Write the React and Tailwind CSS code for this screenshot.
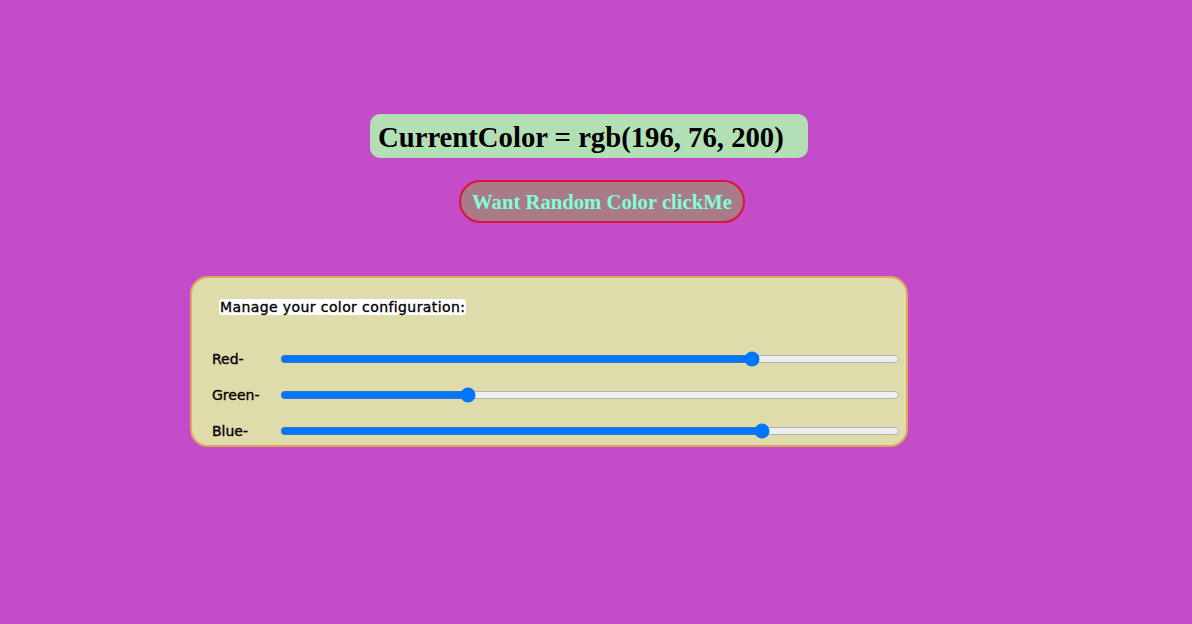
import { useState } from "react";

export default function App() {
  const [color, setColor] = useState({ r: 196, g: 76, b: 200 });

  const rgb = `rgb(${color.r}, ${color.g}, ${color.b})`;

  const randomColor = () => {
    setColor({
      r: Math.floor(Math.random() * 256),
      g: Math.floor(Math.random() * 256),
      b: Math.floor(Math.random() * 256),
    });
  };

  const sliders = [
    { key: "r", label: "Red-" },
    { key: "g", label: "Green-" },
    { key: "b", label: "Blue-" },
  ];

  return (
    <main
      className="w-full min-h-[624px] flex flex-col items-start pt-[114px]"
      style={{ backgroundColor: rgb }}
    >
      <h1 className="ml-[370px] h-[44px] w-[438px] flex items-center pl-2 pt-[2px] rounded-[10px] bg-[#b3dfb4] text-black text-[28.7px] font-bold font-['Liberation_Serif',serif] leading-none whitespace-nowrap">
        CurrentColor = {rgb}
      </h1>

      <button
        onClick={randomColor}
        className="ml-[459px] mt-[22px] h-[43px] w-[286px] rounded-full border-2 border-[#dc143c] bg-[#a97b88] text-[#7fffd4] text-[20.7px] font-bold font-['Liberation_Serif',serif] whitespace-nowrap pt-[2px]"
      >
        Want Random Color clickMe
      </button>

      <section className="ml-[190px] mt-[53px] w-[718px] h-[171px] rounded-[18px] border-2 border-[#e0a55e] bg-[#dfdcab] pl-[20px] pr-[6px] pt-[17px] font-['DejaVu_Sans',sans-serif] text-black [-webkit-text-stroke:0.35px_black]">
        <p className="ml-[7px] inline-block bg-white rounded-[4px] px-[1px] text-[14px] tracking-[0.4px] leading-[16px]">
          Manage your color configuration:
        </p>
        <div className="mt-[30px] flex flex-col gap-[16px]">
          {sliders.map((s) => (
            <div key={s.key} className="flex items-center h-[20px]">
              <span className="w-[68px] text-[14px]">{s.label}</span>
              <input
                type="range"
                min="0"
                max="255"
                value={color[s.key]}
                onChange={(e) =>
                  setColor({ ...color, [s.key]: Number(e.target.value) })
                }
                className="flex-1 accent-[#0075ff]"
              />
            </div>
          ))}
        </div>
      </section>
    </main>
  );
}
